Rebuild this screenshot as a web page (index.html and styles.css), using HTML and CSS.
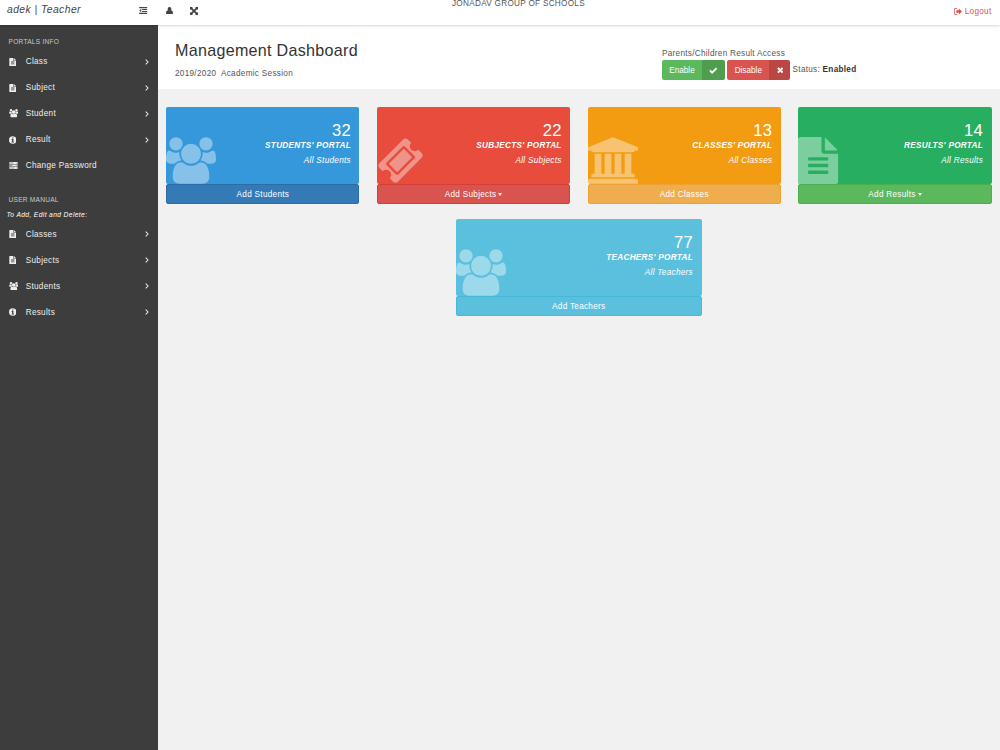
FILE: index.html
```html
<!DOCTYPE html>
<html lang="en">
<head>
<meta charset="utf-8">
<title>Management Dashboard</title>
<link rel="stylesheet" href="styles.css">
</head>
<body>
<svg class="defs" xmlns="http://www.w3.org/2000/svg">
  <symbol id="users" viewBox="0 0 1920 1792"><path d="M593 896q-162 5-265 128h-134q-82 0-138-40.5t-56-118.5q0-353 124-353 6 0 43.5 21t97.500 42.500 119 21.500q67 0 133-23-5 37-5 66 0 159 81 256zm1071 637q0 120-73 189.500t-194 69.500h-874q-121 0-194-69.500t-73-189.500q0-53 3.500-103.500t14-109 26.500-108.500 43-97.500 62-81 85.500-53.500 111.500-20q10 0 43 21.500t73 48 107 48 135 21.500 135-21.500 107-48 73-48 43-21.500q61 0 111.500 20t85.500 53.500 62 81 43 97.500 26.500 108.500 14 109 3.500 103.500zm-1024-1277q0 106-75 181t-181 75-181-75-75-181 75-181 181-75 181 75 75 181zm704 384q0 159-112.500 271.500t-271.500 112.500-271.500-112.500-112.500-271.500 112.500-271.500 271.500-112.500 271.500 112.500 112.500 271.500zm576 225q0 78-56 118.500t-138 40.500h-134q-103-123-265-128 81-97 81-256 0-29-5-66 66 23 133 23 59 0 119-21.500t97.500-42.500 43.500-21q124 0 124 353zm-128-609q0 106-75 181t-181 75-181-75-75-181 75-181 181-75 181 75 75 181z"/></symbol>
  <symbol id="ticket" viewBox="0 0 1792 1792"><path d="M1024 452l316 316-572 572-316-316zm-211 979l618-618q19-19 19-45t-19-45l-362-362q-18-18-45-18t-45 18l-618 618q-19 19-19 45t19 45l362 362q18 18 45 18t45-18zm889-637l-907 908q-37 37-90.500 37t-90.500-37l-126-125q56-56 56-136t-56-136-136-56-136 56l-125-126q-37-37-37-90.500t37-90.500l907-906q37-37 90.500-37t90.500 37l125 125q-56 56-56 136t56 136 136 56 136-56l126 125q37 37 37 90.500t-37 90.500z"/></symbol>
  <symbol id="bank" viewBox="0 0 1920 1792"><path d="M960 0l960 384v128h-128q0 26-20.500 45t-48.500 19h-1526q-28 0-48.500-19t-20.500-45h-128v-128zm-704 640h256v768h128v-768h256v768h128v-768h256v768h128v-768h256v768h59q28 0 48.500 19t20.500 45v64h-1664v-64q0-26 20.500-45t48.500-19h59v-768zm1595 960q28 0 48.500 19t20.500 45v128h-1920v-128q0-26 20.500-45t48.500-19h1782z"/></symbol>
  <symbol id="file" viewBox="0 0 1536 1792"><path fill-rule="evenodd" d="M1024 24q20 10 36 26l408 408q16 16 28 54h-472zM96 0h800v544q0 40 28 68t68 28h544v1056q0 40-28 68t-68 28H96q-40 0-68-28t-28-68V96q0-40 28-68T96 0zM416 768q-32 0-32 32v64q0 32 32 32h704q32 0 32-32v-64q0-32-32-32zM416 1024q-32 0-32 32v64q0 32 32 32h704q32 0 32-32v-64q0-32-32-32zM416 1280q-32 0-32 32v64q0 32 32 32h704q32 0 32-32v-64q0-32-32-32z"/></symbol>
  <symbol id="info" viewBox="0 0 12 12"><path fill-rule="evenodd" d="M6 0a6 6 0 1 1 0 12a6 6 0 0 1 0-12zM5 1.800v1.700h2V1.800zM4 4.500v1.200h1v3H4V10h4V8.700H7V4.500z"/></symbol>
  <symbol id="server" viewBox="0 0 14 12"><path fill-rule="evenodd" d="M0 0h14v3.400H0zM0 4.300h14v3.400H0zM0 8.600h14V12H0zM1 1.300v.8h6v-.8zM1 5.600v.8h4v-.8zM1 9.900v.8h8v-.8zM11.500 1.200v1h1v-1zM11.500 5.500v1h1v-1zM11.500 9.800v1h1v-1z"/></symbol>
  <symbol id="angle" viewBox="0 0 6 10"><path d="M1 1l4 4-4 4" fill="none" stroke="currentColor" stroke-width="1.700"/></symbol>
  <symbol id="outdent" viewBox="0 0 14 12"><path d="M0 0h14v2H0zM5 3.400h9v1.900H5zM5 6.800h9v1.900H5zM0 10h14V12H0zM3.500 3.200v5.600L.3 6z"/></symbol>
  <symbol id="user" viewBox="0 0 12 13"><path d="M6 0a3.300 3.300 0 1 1 0 6.600A3.300 3.300 0 0 1 6 0zM3 5.800q3 2.600 6 0 3 .3 3 4.700 0 2.500-2 2.500H2q-2 0-2-2.500 0-4.400 3-4.700z"/></symbol>
  <symbol id="expand" viewBox="0 0 12 12"><path d="M0 0h4.500L3.200 1.300 6 4.200l2.800-2.900L7.500 0H12v4.500l-1.300-1.300L7.800 6l2.900 2.800L12 7.500V12H7.500l1.300-1.300L6 7.800l-2.800 2.900L4.500 12H0V7.500l1.300 1.300L4.200 6 1.300 3.200 0 4.500z"/></symbol>
  <symbol id="exit" viewBox="0 0 14 12"><path d="M5.500 0v1.300H2.400q-1.100 0-1.100 1.100v7.200q0 1.100 1.100 1.100h3.100V12H2.400Q0 12 0 9.600V2.400Q0 0 2.400 0zM8.500.8L14 6l-5.500 5.200V8H4V4h4.500z"/></symbol>
  <symbol id="check" viewBox="0 0 14 11"><path d="M1.500 5.300l3.800 3.700L12.500 1.600" fill="none" stroke="currentColor" stroke-width="3.200"/></symbol>
  <symbol id="times" viewBox="0 0 11 11"><path d="M1.500 1.500l8 8M9.500 1.500l-8 8" fill="none" stroke="currentColor" stroke-width="3.300"/></symbol>
</svg>

<header class="topbar">
  <div class="brand">adek | Teacher</div>
  <nav class="tools">
    <svg class="tool-outdent"><use href="#outdent"/></svg>
    <svg class="tool-user"><use href="#user"/></svg>
    <svg class="tool-expand"><use href="#expand"/></svg>
  </nav>
  <div class="school">JONADAV GROUP OF SCHOOLS</div>
  <a class="logout"><svg><use href="#exit"/></svg>Logout</a>
</header>

<div class="shell">
  <aside class="sidebar">
    <h2 class="side-title">PORTALS INFO</h2>
    <ul class="menu">
      <li><svg class="i-file"><use href="#file"/></svg><span>Class</span><svg class="angle"><use href="#angle"/></svg></li>
      <li><svg class="i-file"><use href="#file"/></svg><span>Subject</span><svg class="angle"><use href="#angle"/></svg></li>
      <li><svg class="i-wide"><use href="#users"/></svg><span>Student</span><svg class="angle"><use href="#angle"/></svg></li>
      <li><svg class="i-file"><use href="#info"/></svg><span>Result</span><svg class="angle"><use href="#angle"/></svg></li>
      <li><svg class="i-server"><use href="#server"/></svg><span>Change Password</span></li>
    </ul>
    <h2 class="side-title manual">USER MANUAL</h2>
    <p class="side-note">To Add, Edit and Delete:</p>
    <ul class="menu">
      <li><svg class="i-file"><use href="#file"/></svg><span>Classes</span><svg class="angle"><use href="#angle"/></svg></li>
      <li><svg class="i-file"><use href="#file"/></svg><span>Subjects</span><svg class="angle"><use href="#angle"/></svg></li>
      <li><svg class="i-wide"><use href="#users"/></svg><span>Students</span><svg class="angle"><use href="#angle"/></svg></li>
      <li><svg class="i-file"><use href="#info"/></svg><span>Results</span><svg class="angle"><use href="#angle"/></svg></li>
    </ul>
  </aside>

  <main class="content">
    <section class="heading">
      <div class="heading-text">
        <h1>Management Dashboard</h1>
        <p>2019/2020&nbsp; Academic Session</p>
      </div>
      <div class="access">
        <div class="access-label">Parents/Children Result Access</div>
        <div class="access-row">
          <button class="toggle enable"><span>Enable</span><i><svg class="i-check"><use href="#check"/></svg></i></button>
          <button class="toggle disable"><span>Disable</span><i><svg class="i-times"><use href="#times"/></svg></i></button>
          <div class="status">Status: <b>Enabled</b></div>
        </div>
      </div>
    </section>

    <section class="cards">
      <article class="card students">
        <div class="panel"><svg class="art wide"><use href="#users"/></svg><div class="info"><strong>32</strong><b>STUDENTS' PORTAL</b><em>All Students</em></div></div>
        <button class="add">Add Students</button>
      </article>
      <article class="card subjects">
        <div class="panel"><svg class="art square"><use href="#ticket"/></svg><div class="info"><strong>22</strong><b>SUBJECTS' PORTAL</b><em>All Subjects</em></div></div>
        <button class="add">Add Subjects<span class="caret"></span></button>
      </article>
      <article class="card classes">
        <div class="panel"><svg class="art wide"><use href="#bank"/></svg><div class="info"><strong>13</strong><b>CLASSES' PORTAL</b><em>All Classes</em></div></div>
        <button class="add">Add Classes</button>
      </article>
      <article class="card results">
        <div class="panel"><svg class="art narrow"><use href="#file"/></svg><div class="info"><strong>14</strong><b>RESULTS' PORTAL</b><em>All Results</em></div></div>
        <button class="add">Add Results<span class="caret"></span></button>
      </article>
    </section>
    <section class="cards-second">
      <article class="card teachers">
        <div class="panel"><svg class="art wide"><use href="#users"/></svg><div class="info"><strong>77</strong><b>TEACHERS' PORTAL</b><em>All Teachers</em></div></div>
        <button class="add">Add Teachers</button>
      </article>
    </section>
  </main>
</div>
</body>
</html>
```

FILE: styles.css
```css
* { box-sizing: border-box; }
body {
  margin: 0;
  height: 750px;
  display: flex;
  flex-direction: column;
  overflow: hidden;
  background: #f1f1f1;
  color: #555;
  font: 8.200px/12px "Liberation Sans", Arial, sans-serif;
  letter-spacing: .290px;
}
h1, h2, p, ul { margin: 0; padding: 0; font-weight: normal; }
ul { list-style: none; }
svg { display: block; fill: currentColor; flex: none; }
button { border: 0; padding: 0; font: inherit; letter-spacing: inherit; color: #fff; }
.defs { display: none; }

.topbar {
  height: 25px;
  flex: none;
  display: flex;
  align-items: flex-start;
  background: #fff;
  position: relative;
  box-shadow: 0 0 3px rgba(0, 0, 0, .3);
  z-index: 1;
}
.brand { width: 139px; padding: 4px 0 0 7px; font-size: 10.300px; letter-spacing: .460px; font-style: italic; color: #444; }
.tools { display: flex; align-items: center; width: 313px; padding-top: 6.500px; color: #444; }
.tool-outdent { width: 8.500px; height: 7px; margin-right: 18.500px; }
.tool-user { width: 7px; height: 7.500px; margin-right: 17px; }
.tool-expand { width: 8px; height: 8px; }
.school { margin-top: -2px; white-space: nowrap; letter-spacing: .280px; }
.logout { margin-left: auto; padding: 5.500px 8.500px 0 0; display: flex; align-items: center; gap: 2.500px; color: #d9534f; }
.logout svg { width: 8px; height: 7px; }

.shell { flex: 1; display: flex; min-height: 0; }
.sidebar { width: 157.500px; flex: none; background: #3d3d3d; color: #eee; padding-top: 10.500px; }
.side-title { padding-left: 8.500px; font-size: 6.600px; line-height: 12px; letter-spacing: .240px; color: #c9c9c9; }
.side-title.manual { margin-top: 15px; }
.side-note { padding-left: 6.500px; margin-top: 3px; font-size: 6.700px; line-height: 12px; letter-spacing: .370px; font-style: italic; color: #fff; }
.menu { padding-top: 2px; }
.menu li { height: 25.900px; display: flex; align-items: center; padding: 0 8.500px; }
.menu li svg { margin-top: -1px; }
.side-note + .menu { padding-top: 1px; }
.menu span { flex: 1; }
.i-file { width: 7.500px; height: 8px; margin-right: 9.700px; }
.i-wide { width: 9.500px; height: 8.500px; margin-right: 7.700px; }
.i-server { width: 9px; height: 7px; margin-right: 8.200px; }
.angle { width: 3.800px; height: 6px; }

.content { flex: 1; min-width: 0; }
.heading { height: 64px; background: #fff; display: flex; padding-left: 17.500px; }
.heading-text { width: 487px; padding-top: 15px; }
.heading-text h1 { font-size: 16.100px; line-height: 20px; color: #333; }
.heading-text p { margin-top: 8px; line-height: 12px; }
.access { padding-top: 23px; }
.access-label { line-height: 12px; letter-spacing: .280px; }
.access-row { display: flex; }
.toggle { height: 20px; display: flex; border-radius: 2px; overflow: hidden; letter-spacing: 0; line-height: 21px; margin-right: 2.300px; }
.toggle span { width: 40px; }
.toggle i { width: 23px; background: rgba(0, 0, 0, .14); display: flex; align-items: center; justify-content: center; }
.enable { background: #5cb85c; }
.disable { background: #d9534f; }
.disable span { width: 42px; }
.disable i { width: 21px; }
.i-check { width: 8.500px; height: 7px; }
.i-times { width: 6.500px; height: 6.500px; }
.status { line-height: 19px; letter-spacing: .280px; }
.status b { color: #333; }

.cards { display: grid; grid-template-columns: repeat(4, 193.200px); column-gap: 17.500px; padding: 18px 0 0 8.800px; }
.cards-second { display: flex; padding: 15px 0 0 298.500px; }
.teachers { width: 245.500px; }
.panel { height: 77px; display: flex; align-items: flex-end; justify-content: space-between; border-radius: 2px; color: #fff; }
.art { height: 47px; opacity: .4; }
.art.wide { width: 50px; }
.art.square { width: 47px; }
.art.narrow { width: 40.300px; }
.info { display: flex; flex-direction: column; align-items: flex-end; height: 100%; padding: 14px 8.500px 0 0; }
.info strong { font-size: 16.600px; line-height: 20px; font-weight: normal; }
.info b { font-style: italic; line-height: 10px; }
.info em { margin-top: 4px; line-height: 12px; }
.add { display: flex; align-items: center; justify-content: center; width: 100%; height: 20px; padding-top: 1px; border-radius: 2px; border: 1px solid transparent; }
.caret { margin-left: 2px; border: 2.500px solid transparent; border-top: 3px solid #fff; border-bottom: 0; }

.students .panel { background: #3498db; }
.students .add { background: #337ab7; border-color: #2e6da4; }
.subjects .panel { background: #e74c3c; }
.subjects .add { background: #d9534f; border-color: #d43f3a; }
.classes .panel { background: #f39c12; }
.classes .add { background: #f0ad4e; border-color: #eea236; }
.results .panel { background: #27ae60; }
.results .add { background: #5cb85c; border-color: #4cae4c; }
.teachers .panel { background: #5bc0de; }
.teachers .add { background: #5bc0de; border-color: #46b8da; }
```
